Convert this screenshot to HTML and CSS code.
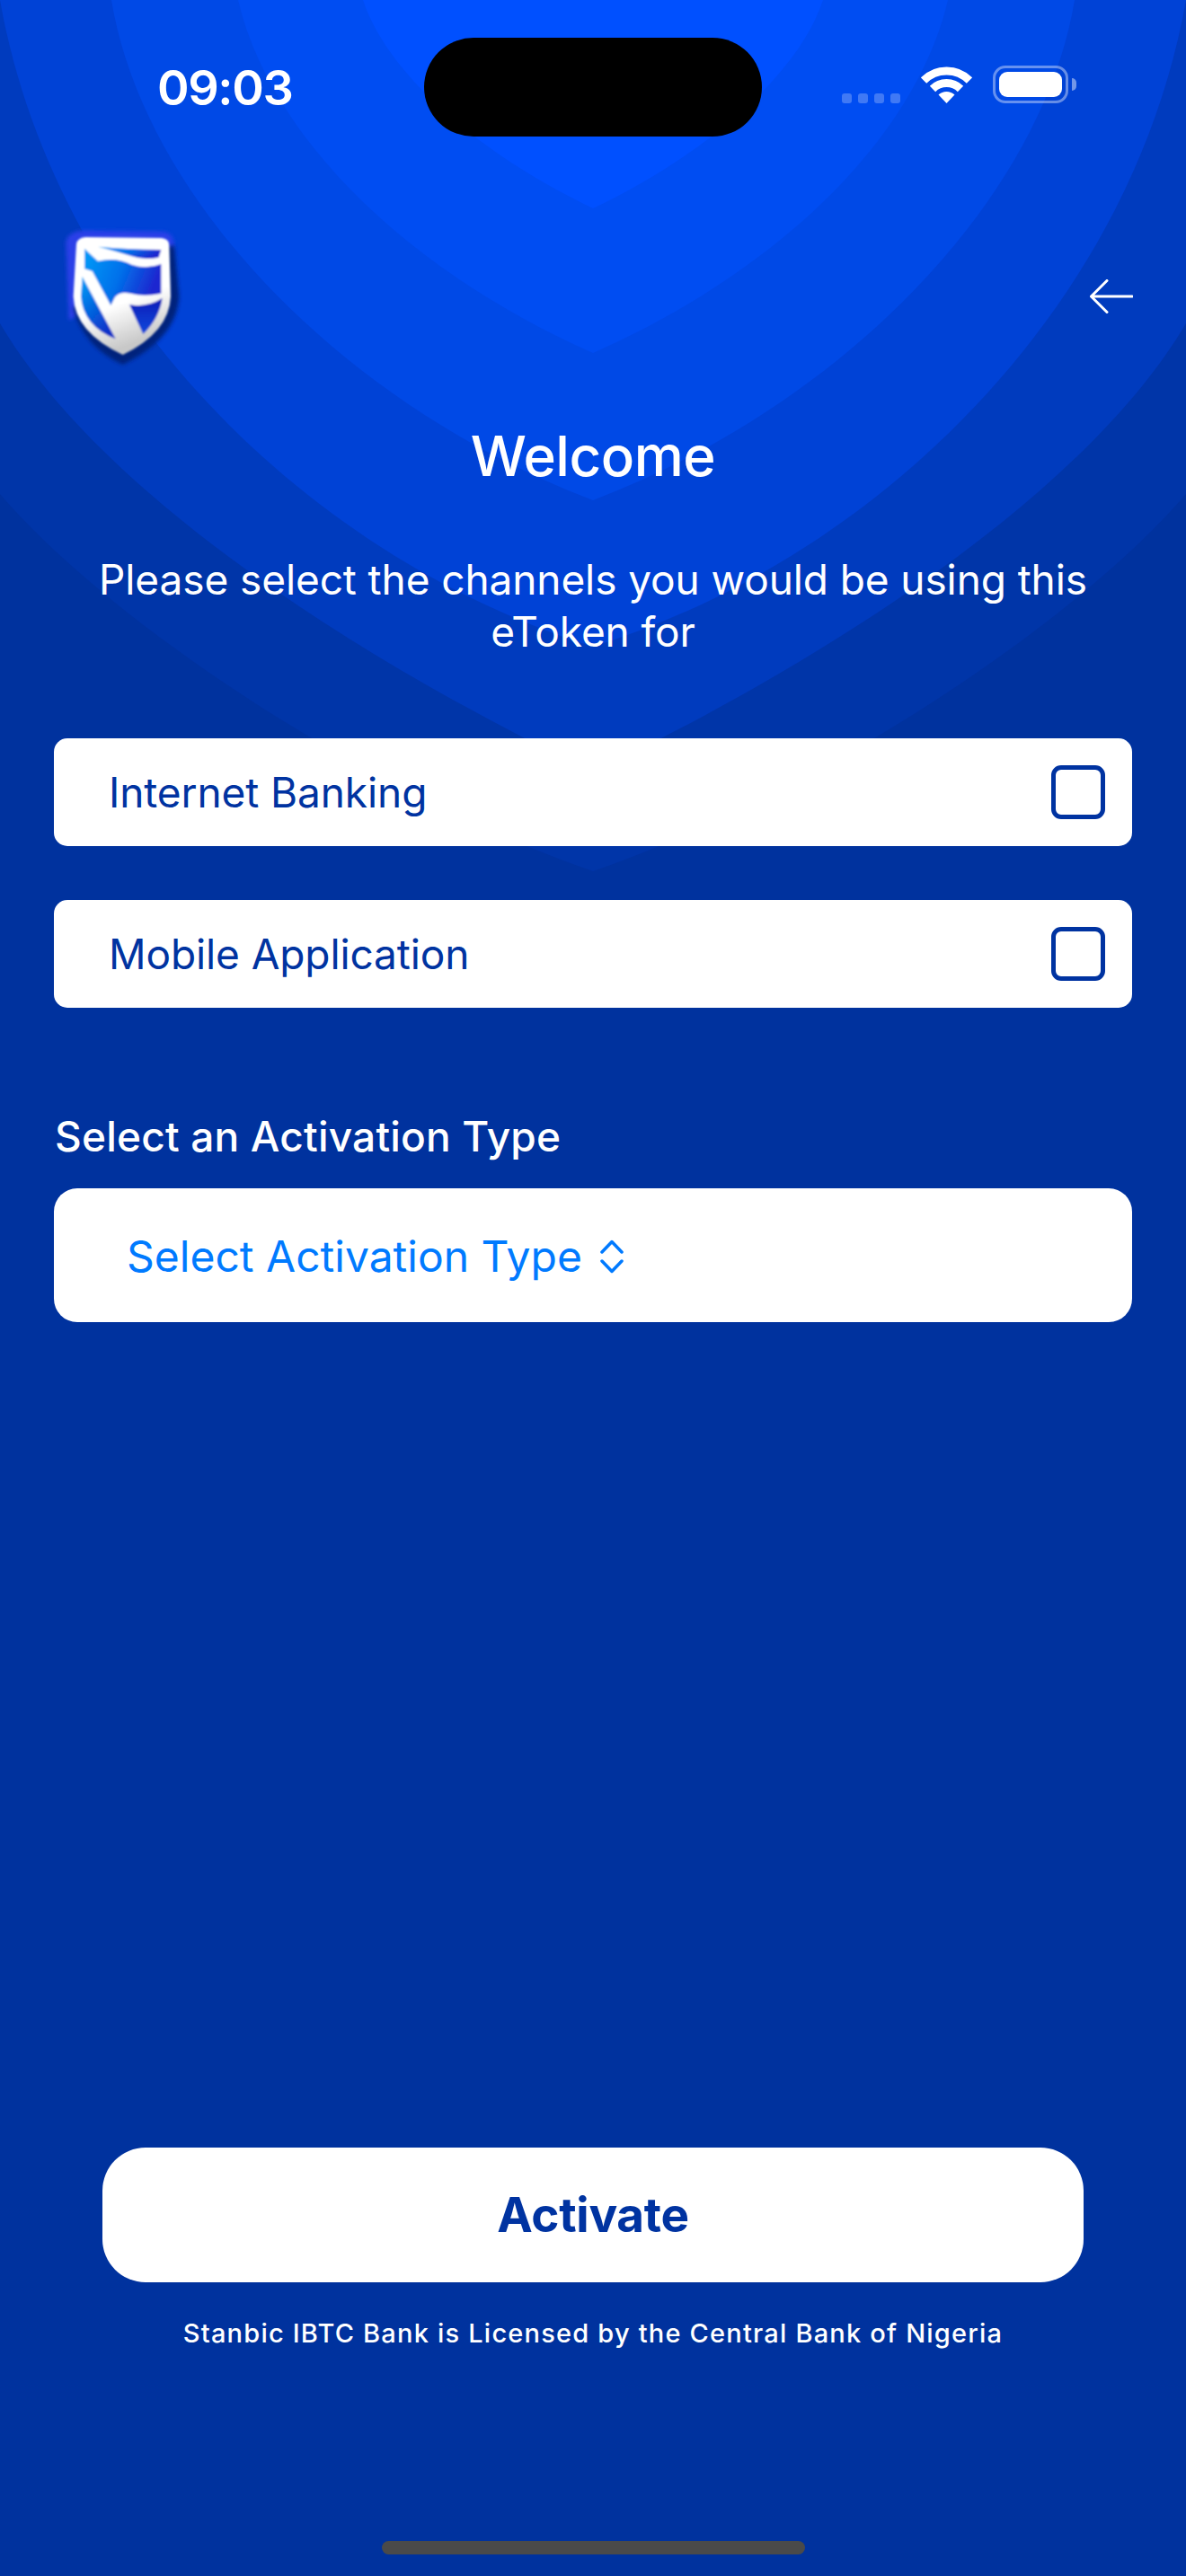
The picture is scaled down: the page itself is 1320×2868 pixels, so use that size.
FILE: index.html
```html
<!DOCTYPE html>
<html lang="en">

<head>
    <meta charset="UTF-8">
    <meta name="viewport" content="width=device-width, initial-scale=1.0">
    <title>eToken Activation</title>
    <link rel="stylesheet" href="styles.css">
</head>

<body>

    <div class="screen">
        <!-- background shapes, outermost first -->
        <svg class="backdrop" viewBox="0 0 1320 1000" width="1320" height="1000">
            <path class="layer-6" d="M0,550 C120,690 400,880 660,970 C920,880 1200,690 1320,550 L1320,0 L0,0 Z" />
            <path class="layer-5" d="M0,360 C100,530 350,710 660,860 C970,710 1220,530 1320,360 L1320,0 L0,0 Z" />
            <path class="layer-4" d="M0,0 C60,340 340,620 660,720 C980,620 1260,340 1320,0 Z" />
            <path class="layer-3" d="M124,0 C160,220 380,450 660,557 C940,450 1160,220 1196,0 Z" />
            <path class="layer-2" d="M265,0 C300,150 450,300 660,393 C870,300 1020,150 1055,0 Z" />
            <path class="layer-1" d="M404,0 C430,80 530,170 660,232 C790,170 890,80 916,0 Z" />
        </svg>

        <div class="status-bar">
            <span class="time">09:03</span>
            <div class="island"></div>
            <div class="status-icons">
                <div class="signal">
                    <span></span><span></span><span></span><span></span>
                </div>
                <svg class="wifi" viewBox="0 0 57 42" width="57" height="42">
                    <path d="M3,16.5 A36,36 0 0 1 54,16.5" />
                    <path d="M13,26 A22,22 0 0 1 44,26" />
                    <path class="wedge" d="M28.5,42 L19.5,32.5 A13,13 0 0 1 37.5,32.5 Z" />
                </svg>
                <div class="battery">
                    <div class="battery-fill"></div>
                </div>
                <div class="battery-nub"></div>
            </div>
        </div>

        <div class="top-row">
            <svg class="logo" viewBox="0 0 540 570" width="180" height="190">
                <defs>
                    <linearGradient id="flag" x1="0" y1="0" x2="1" y2="0.3">
                        <stop offset="0" stop-color="#009cf8" />
                        <stop offset="0.55" stop-color="#0070ea" />
                        <stop offset="1" stop-color="#1c28d0" />
                    </linearGradient>
                    <linearGradient id="panel" x1="0" y1="0" x2="0" y2="1">
                        <stop offset="0" stop-color="#0c1cb8" />
                        <stop offset="1" stop-color="#0a48dc" />
                    </linearGradient>
                    <linearGradient id="left-panel" x1="0" y1="0" x2="0.6" y2="1">
                        <stop offset="0" stop-color="#00a0f8" />
                        <stop offset="1" stop-color="#0a30c8" />
                    </linearGradient>
                    <linearGradient id="metal" x1="0" y1="0" x2="0.3" y2="1">
                        <stop offset="0.65" stop-color="#ffffff" />
                        <stop offset="1" stop-color="#c8c8c8" />
                    </linearGradient>
                    <filter id="soft"><feGaussianBlur stdDeviation="2.500" /></filter>
                    <filter id="softer"><feGaussianBlur stdDeviation="6" /></filter>
                </defs>
                <path class="halo-top" filter="url(#softer)" d="M100,118 Q108,80 165,80 L425,84 Q462,88 460,130 L445,200 L110,380 Z" />
                <path class="halo-bottom" filter="url(#softer)" d="M125,340 L300,160 L462,130 L478,300 Q470,440 290,528 Q160,470 125,340 Z" />
                <g filter="url(#soft)">
                    <path fill="url(#metal)" d="M135,125 Q138,105 165,102 L420,105 Q445,108 445,130 L450,300 Q445,420 290,495 Q130,420 125,300 Z" />
                    <path fill="url(#flag)" d="M208,134 Q300,142 418,144 L410,170 Q360,180 320,166 Q270,150 208,134 Z" />
                    <path fill="url(#flag)" d="M162,140 L207,182 Q270,168 320,194 Q370,210 418,192 L418,290 Q360,302 316,290 Q280,282 264,302 L250,330 L188,216 L162,208 Z" />
                    <path fill="url(#left-panel)" d="M155,234 L266,442 Q158,400 150,300 Z" />
                    <path fill="url(#panel)" d="M312,328 Q370,338 422,306 Q412,374 358,426 Z" />
                </g>
            </svg>
            <svg class="back-arrow" viewBox="0 0 48 38" width="48" height="38">
                <path d="M47,19 L1.500,19 M19,1.500 L1.500,19 L19,36.500" />
            </svg>
        </div>

        <h1 class="welcome">Welcome</h1>
        <p class="intro">Please select the channels you would be using this<br>eToken for</p>

        <div class="channels">
            <div class="channel">
                <span>Internet Banking</span>
                <div class="checkbox"></div>
            </div>
            <div class="channel">
                <span>Mobile Application</span>
                <div class="checkbox"></div>
            </div>
        </div>

        <div class="field-label">Select an Activation Type</div>
        <div class="picker">
            <span>Select Activation Type</span>
            <svg class="chevrons" viewBox="0 0 26 38" width="26" height="38">
                <path d="M2,14 L13,2.500 L24,14 M2,24 L13,35.500 L24,24" />
            </svg>
        </div>

        <button class="activate">Activate</button>
        <div class="license">Stanbic IBTC Bank is Licensed by the Central Bank of Nigeria</div>

        <div class="home-indicator"></div>
    </div>

</body>

</html>
```

FILE: styles.css
```css
body {
    margin: 0;
    padding: 0;
    font-family: 'Inter', 'Liberation Sans', sans-serif;
}

.screen {
    position: relative;
    display: flex;
    flex-direction: column;
    width: 1320px;
    height: 2868px;
    overflow: hidden;
    background-color: #00329e;
    color: white;
}

.backdrop {
    position: absolute;
    top: 0;
    left: 0;
}

.layer-1 { fill: #0050ff; }
.layer-2 { fill: #004df2; }
.layer-3 { fill: #0049e6; }
.layer-4 { fill: #0042d6; }
.layer-5 { fill: #003bbe; }
.layer-6 { fill: #0035a8; }

/* status bar */
.status-bar {
    position: relative;
    display: flex;
    justify-content: space-between;
    height: 188px;
    padding-top: 42px;
}

.time {
    margin: 25px 0 0 175px;
    font-size: 54px;
    font-weight: 600;
    letter-spacing: -1.400px;
    line-height: 62px;
    height: 62px;
}

.island {
    position: absolute;
    top: 42px;
    left: 472px;
    width: 376px;
    height: 110px;
    border-radius: 55px;
    background-color: black;
}

.status-icons {
    display: flex;
    align-items: flex-start;
    margin: 31px 122px 0 0;
}

.signal {
    display: flex;
    gap: 7px;
    margin: 31px 23px 0 0;
}

.signal span {
    width: 11px;
    height: 11px;
    border-radius: 3px;
    background-color: rgba(255, 255, 255, 0.25);
}

.wifi path {
    fill: none;
    stroke: white;
    stroke-width: 9;
}

.wifi .wedge {
    fill: white;
    stroke: none;
}

.battery {
    width: 84px;
    height: 42px;
    margin-left: 23px;
    box-sizing: border-box;
    padding: 4px;
    border: 3px solid rgba(255, 255, 255, 0.4);
    border-radius: 14px;
}

.battery-fill {
    height: 100%;
    border-radius: 9px;
    background-color: white;
}

.battery-nub {
    width: 5px;
    height: 14px;
    margin: 14px 0 0 4px;
    border-radius: 0 5px 5px 0;
    background-color: rgba(255, 255, 255, 0.45);
}

/* logo and back arrow */
.top-row {
    position: relative;
    display: flex;
    justify-content: space-between;
    align-items: center;
    padding: 0 59px 0 40px;
    height: 190px;
}

.halo-top {
    fill: #2a3fe8;
}

.halo-bottom {
    fill: #00247c;
}

.back-arrow {
    margin-top: 10px;
}

.back-arrow path {
    fill: none;
    stroke: white;
    stroke-width: 3;
    stroke-linecap: round;
    stroke-linejoin: round;
}

/* intro text */
.welcome {
    position: relative;
    margin: 51px 0 0;
    font-size: 62px;
    font-weight: 500;
    letter-spacing: -0.500px;
    line-height: 74px;
    text-align: center;
}

.intro {
    position: relative;
    margin: 71px 0 0;
    font-size: 46px;
    font-weight: 400;
    letter-spacing: -0.100px;
    line-height: 58px;
    text-align: center;
}

/* channel rows */
.channels {
    position: relative;
    display: flex;
    flex-direction: column;
    gap: 60px;
    margin: 90px 60px 0;
}

.channel {
    display: flex;
    justify-content: space-between;
    align-items: center;
    height: 120px;
    padding: 0 30px 0 61px;
    border-radius: 15px;
    background-color: white;
    color: #0033a1;
    font-size: 46px;
    letter-spacing: -0.100px;
}

.checkbox {
    box-sizing: border-box;
    width: 60px;
    height: 60px;
    border: 5px solid #0033a1;
    border-radius: 11px;
}

.field-label {
    margin: 116px 0 0 61px;
    font-size: 46px;
    font-weight: 500;
    letter-spacing: 0.200px;
    line-height: 54px;
}

.picker {
    box-sizing: border-box;
    display: flex;
    align-items: center;
    gap: 20px;
    height: 149px;
    margin: 31px 60px 0;
    padding: 2px 0 0 81px;
    border-radius: 26px;
    background-color: white;
    color: #007aff;
    font-size: 48px;
}

.chevrons path {
    fill: none;
    stroke: #007aff;
    stroke-width: 3.500;
    stroke-linecap: round;
    stroke-linejoin: round;
}

/* bottom */
.activate {
    width: 1092px;
    height: 150px;
    margin: 919px auto 0;
    padding: 0;
    border: none;
    border-radius: 48px;
    background-color: white;
    color: #0033a1;
    font-family: inherit;
    font-size: 53px;
    font-weight: 700;
    letter-spacing: -0.300px;
}

.license {
    margin-top: 39px;
    font-size: 29px;
    font-weight: 500;
    letter-spacing: 1.200px;
    line-height: 36px;
    text-align: center;
}

.home-indicator {
    width: 471px;
    height: 15px;
    margin: auto auto 24px;
    border-radius: 8px;
    background-color: #4a4a4a;
}
```
